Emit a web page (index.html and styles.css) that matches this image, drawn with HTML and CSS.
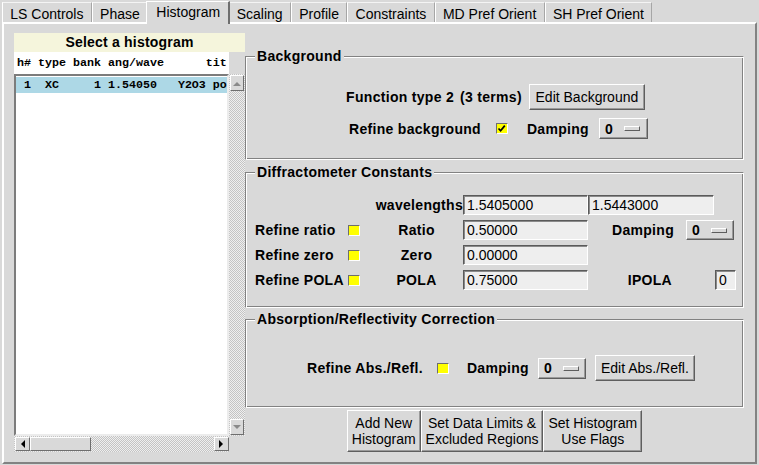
FILE: index.html
```html
<!DOCTYPE html>
<html>
<head>
<meta charset="utf-8">
<link rel="stylesheet" href="styles.css">
</head>
<body>
<div class="app">
  <div class="tabs">
    <div class="tab">LS Controls</div>
    <div class="tab">Phase</div>
    <div class="tab active">Histogram</div>
    <div class="tab">Scaling</div>
    <div class="tab">Profile</div>
    <div class="tab">Constraints</div>
    <div class="tab">MD Pref Orient</div>
    <div class="tab">SH Pref Orient</div>
  </div>
  <div class="panel">
    <div class="hist-col">
      <div class="hist-title">Select a histogram</div>
      <div class="hist-head">h# type bank ang/wave      tit</div>
      <div class="hist-body">
        <div class="listbox">
          <div class="lrow sel"> 1  XC     1 1.54050   Y2O3 po</div>
        </div>
        <div class="vscroll">
          <div class="sbtn"><svg width="8" height="5" viewBox="0 0 8 5"><path d="M0 5 L4 1 L8 5 Z" fill="#8a8a8a"/></svg></div>
          <div class="sbtn"><svg width="8" height="5" viewBox="0 0 8 5"><path d="M0 0 L4 4 L8 0 Z" fill="#8a8a8a"/></svg></div>
        </div>
        <div class="hscroll">
          <div class="sbtn h"><svg width="5" height="8" viewBox="0 0 5 8"><path d="M5 0 L1 4 L5 8 Z" fill="#000"/></svg></div>
          <div class="thumb"></div>
          <div class="fill"></div>
          <div class="sbtn h"><svg width="5" height="8" viewBox="0 0 5 8"><path d="M0 0 L4 4 L0 8 Z" fill="#000"/></svg></div>
        </div>
        <div class="corner"></div>
      </div>
    </div>

    <div class="main-col">
      <div class="group g-bg">
        <div class="group-title">Background</div>
        <div class="bg-row1">
          <span class="lbl">Function type 2</span>
          <span class="lbl terms">(3 terms)</span>
          <div class="btn edit-bg">Edit Background</div>
        </div>
        <div class="bg-row2">
          <span class="lbl">Refine background</span>
          <span class="check on"><svg width="9" height="9" viewBox="0 0 9 9"><path d="M1.5 4.5 L3.6 6.8 L7.8 1.6" fill="none" stroke="#000" stroke-width="1.7"/></svg></span>
          <span class="lbl damp">Damping</span>
          <div class="menubtn"><span>0</span><i class="ind"></i></div>
        </div>
      </div>

      <div class="group g-diff">
        <div class="group-title">Diffractometer Constants</div>
        <div class="diff-grid">
          <div></div><div></div>
          <div class="lbl end">wavelengths</div>
          <div class="entry">1.5405000</div>
          <div class="entry wide">1.5443000</div>

          <div class="lbl first">Refine ratio</div>
          <span class="check"></span>
          <div class="lbl mid">Ratio</div>
          <div class="entry">0.50000</div>
          <div class="lbl damp2">Damping</div>
          <div class="menubtn mb2"><span>0</span><i class="ind"></i></div>

          <div class="lbl first">Refine zero</div>
          <span class="check"></span>
          <div class="lbl mid">Zero</div>
          <div class="entry">0.00000</div>
          <div></div><div></div>

          <div class="lbl first">Refine POLA</div>
          <span class="check"></span>
          <div class="lbl mid">POLA</div>
          <div class="entry">0.75000</div>
          <div class="lbl ipola">IPOLA</div>
          <div class="entry small">0</div>
        </div>
      </div>

      <div class="group g-abs">
        <div class="group-title">Absorption/Reflectivity Correction</div>
        <div class="abs-row">
          <span class="lbl">Refine Abs./Refl.</span>
          <span class="check c-abs"></span>
          <span class="lbl damp-abs">Damping</span>
          <div class="menubtn mb3"><span>0</span><i class="ind"></i></div>
          <div class="btn edit-abs">Edit Abs./Refl.</div>
        </div>
      </div>

      <div class="actions">
        <div class="btn big">Add New<br>Histogram</div>
        <div class="btn big">Set Data Limits &amp;<br>Excluded Regions</div>
        <div class="btn big">Set Histogram<br>Use Flags</div>
      </div>
    </div>
  </div>
</div>
</body>
</html>
```

FILE: styles.css
```css
* { box-sizing: border-box; }
html, body { margin: 0; padding: 0; }
body {
  background: #d9d9d9;
  font-family: "Liberation Sans", Arial, sans-serif;
  font-size: 14px;
  color: #000;
  width: 759px;
  height: 465px;
  overflow: hidden;
}
.app { padding: 0 2px; }

/* tabs */
.tabs { display: flex; align-items: flex-end; height: 22px; }
.tab {
  height: 20px;
  padding: 3px 7.3px 0;
  line-height: 16px;
  white-space: nowrap;
  border-top: 1px solid #f4f4f4;
  border-left: 1px solid #fff;
  border-right: 1px solid #a6a6a6;
}
.tab.active {
  position: relative;
  z-index: 1;
  height: 23px;
  margin: 0 -2px -2px;
  padding: 2px 8.3px 0 9.3px;
  border-top: 1px solid #fff;
  border-right: 2px solid #6e6e6e;
  background: #d9d9d9;
}

/* main panel */
.panel {
  display: flex;
  align-items: flex-start;
  height: 442px;
  border: 2px solid;
  border-color: #fff #828282 #828282 #fff;
}

/* histogram list */
.hist-col { width: 231px; margin: 9px 0 0 10px; }
.hist-title {
  height: 19px;
  line-height: 19px;
  background: #f5f5dc;
  font-weight: bold;
  letter-spacing: 0.2px;
  text-align: center;
}
.hist-head {
  width: 215px;
  height: 22px;
  line-height: 22px;
  padding-left: 3px;
  background: #fff;
  font-family: "Liberation Mono", "Courier New", monospace;
  font-weight: bold;
  font-size: 11.67px;
  white-space: pre;
  overflow: hidden;
}
.hist-body {
  display: grid;
  grid-template-columns: 215px 16px;
  grid-template-rows: 362px 16px;
}
.listbox {
  background: #fff;
  border: 2px solid;
  border-color: #7c7c7c #ececec #ececec #7c7c7c;
  overflow: hidden;
}
.lrow {
  height: 16px;
  margin-top: 1px;
  line-height: 16px;
  padding-left: 1px;
  font-family: "Liberation Mono", "Courier New", monospace;
  font-weight: bold;
  font-size: 11.67px;
  white-space: pre;
}
.lrow.sel { background: #add8e6; }
.vscroll, .hscroll {
  background: repeating-conic-gradient(#c4c4c4 0 25%, #efefef 0 50%) 0 0 / 2px 2px;
}
.vscroll {
  display: flex;
  flex-direction: column;
  justify-content: space-between;
  padding: 1px;
}
.sbtn {
  width: 14px;
  height: 16px;
  display: flex;
  align-items: center;
  justify-content: center;
  background: #d9d9d9;
  border: 1px solid;
  border-color: #fff #6e6e6e #6e6e6e #fff;
}
.sbtn.h { width: 15px; height: 14px; }
.hscroll { display: flex; padding: 1px 0 1px 1px; }
.thumb {
  width: 61px;
  background: #d9d9d9;
  border: 1px solid;
  border-color: #fff #6e6e6e #6e6e6e #fff;
}
.fill { flex: 1; }
.corner { background: #d9d9d9; }

/* right column */
.main-col { width: 499px; margin-top: 32px; }
.lbl { font-weight: bold; white-space: nowrap; letter-spacing: 0.3px; }
.group {
  border: 1px solid;
  border-color: #828282 #fff #fff #828282;
  box-shadow: inset 1px 1px 0 #fff, inset -1px -1px 0 #828282;
}
.group-title {
  width: max-content;
  margin: -9px 0 0 9px;
  padding: 0 2px;
  line-height: 16px;
  background: #d9d9d9;
  font-weight: bold;
  letter-spacing: 0.3px;
}
.g-bg { height: 104px; }
.g-diff { height: 136px; margin-top: 12px; }
.g-abs { height: 89px; margin-top: 11px; }

.btn {
  display: flex;
  align-items: center;
  justify-content: center;
  text-align: center;
  white-space: nowrap;
  background: #d9d9d9;
  border: 1px solid;
  border-color: #fff #5e5e5e #5e5e5e #fff;
  box-shadow: inset -1px -1px 0 #9a9a9a;
  line-height: 16px;
}
.edit-bg { width: 116px; height: 26px; margin-left: 7px; }
.edit-abs { width: 100px; height: 26px; margin-left: 9px; }

.bg-row1 {
  display: flex;
  align-items: center;
  justify-content: center;
  margin-top: 20px;
  height: 26px;
  padding-left: 2px;
}
.terms { margin-left: 6px; }
.bg-row2 {
  display: flex;
  align-items: center;
  justify-content: center;
  margin-top: 8px;
  height: 21px;
  padding-left: 8px;
}
.check {
  display: inline-flex;
  align-items: center;
  justify-content: center;
  width: 12px;
  height: 11px;
  background: #ffff00;
  border: 1px solid;
  border-color: #6e6e6e #fff #fff #6e6e6e;
}
.bg-row2 .check { margin-left: 15px; }
.damp { margin-left: 19px; }

.menubtn {
  display: flex;
  align-items: center;
  width: 49px;
  height: 21px;
  padding-left: 5px;
  font-weight: bold;
  background: #d9d9d9;
  border: 1px solid;
  border-color: #fff #5e5e5e #5e5e5e #fff;
  box-shadow: inset -1px -1px 0 #9a9a9a;
}
.bg-row2 .menubtn { margin-left: 10px; }
.ind {
  display: block;
  width: 16px;
  height: 5px;
  margin-left: 11px;
  border: 1px solid;
  border-color: #fff #5e5e5e #5e5e5e #fff;
  background: #d9d9d9;
}

.diff-grid {
  display: grid;
  grid-template-columns: 100px 24px 93px 125px 95px 1fr;
  grid-auto-rows: 20px;
  row-gap: 5px;
  margin-top: 15px;
  align-items: center;
}
.first { padding-left: 9px; }
.diff-grid .check { margin-left: 2px; }
.mid { justify-self: center; }
.end { justify-self: end; }
.entry {
  height: 20px;
  line-height: 18px;
  padding-left: 3px;
  background: #eeeeee;
  border: 1px solid;
  border-color: #5a5a5a #fff #fff #5a5a5a;
  box-shadow: inset 1px 1px 0 #8a8a8a;
  white-space: nowrap;
  overflow: hidden;
}
.entry.wide { grid-column: span 2; width: 126px; }
.entry.small { width: 21px; margin-left: 32px; }
.damp2 { justify-self: end; margin-right: 9px; }
.mb2 { width: 48px; height: 20px; margin-left: 3px; }
.ipola { justify-self: end; margin-right: 11px; }

.abs-row {
  display: flex;
  align-items: center;
  justify-content: center;
  margin-top: 28px;
  height: 26px;
  padding-left: 13px;
}
.c-abs { margin-left: 14px; }
.damp-abs { margin-left: 18px; }
.mb3 { width: 48px; margin-left: 9px; }

.actions {
  display: flex;
  justify-content: center;
  margin-top: 2px;
}
.big { height: 42px; padding: 0 4px; }
```
